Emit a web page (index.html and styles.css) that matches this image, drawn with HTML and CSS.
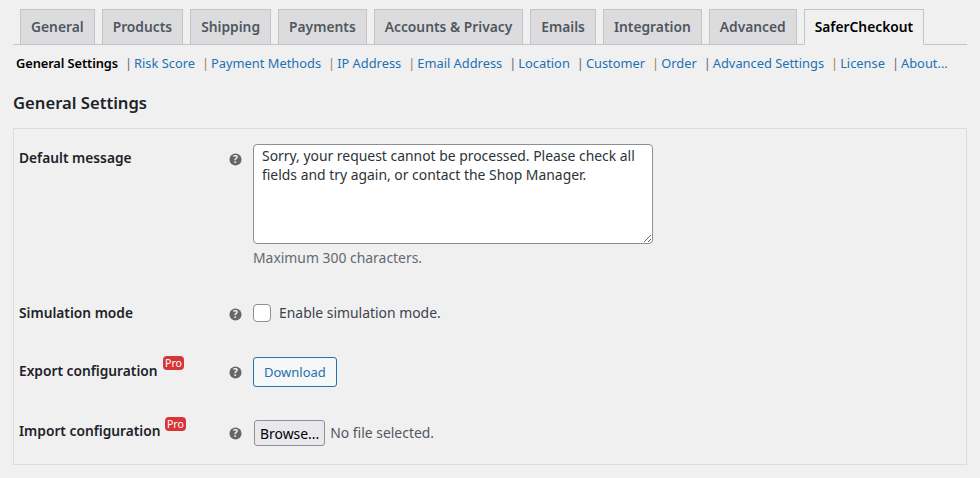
FILE: index.html
```html
<!DOCTYPE html>
<html lang="en">
<head>
<meta charset="utf-8">
<title>SaferCheckout General Settings</title>
<link rel="stylesheet" href="styles.css">
</head>
<body>
<div class="wrap">
  <nav class="tabs">
    <a class="tab" href="#">General</a>
    <a class="tab" href="#">Products</a>
    <a class="tab" href="#">Shipping</a>
    <a class="tab" href="#">Payments</a>
    <a class="tab" href="#">Accounts &amp; Privacy</a>
    <a class="tab" href="#">Emails</a>
    <a class="tab" href="#">Integration</a>
    <a class="tab" href="#">Advanced</a>
    <a class="tab tab-active" href="#">SaferCheckout</a>
  </nav>
  <ul class="subnav">
    <li class="sub-current">General Settings</li>
    <li><span class="sep">|</span><a href="#">Risk Score</a></li>
    <li><span class="sep sep-o">|</span><a href="#">Payment Methods</a></li>
    <li><span class="sep sep-o">|</span><a href="#">IP Address</a></li>
    <li><span class="sep sep-o">|</span><a href="#">Email Address</a></li>
    <li><span class="sep">|</span><a href="#">Location</a></li>
    <li><span class="sep">|</span><a href="#">Customer</a></li>
    <li><span class="sep sep-o">|</span><a href="#">Order</a></li>
    <li><span class="sep">|</span><a href="#">Advanced Settings</a></li>
    <li><span class="sep sep-o">|</span><a href="#">License</a></li>
    <li><span class="sep">|</span><a href="#">About...</a></li>
  </ul>
  <h2 class="title">General Settings</h2>
  <section class="panel">
    <div class="row row-message">
      <div class="label">Default message</div>
      <div class="help"><svg viewBox="0 0 14 14" width="13" height="13"><circle cx="7" cy="7" r="6.5" fill="#666"/><text x="7" y="10.8" class="help-q">?</text></svg></div>
      <div class="field">
        <textarea class="message" rows="5">Sorry, your request cannot be processed. Please check all fields and try again, or contact the Shop Manager.</textarea>
        <p class="hint">Maximum 300 characters.</p>
      </div>
    </div>
    <div class="row row-sim">
      <div class="label">Simulation mode</div>
      <div class="help"><svg viewBox="0 0 14 14" width="13" height="13"><circle cx="7" cy="7" r="6.5" fill="#666"/><text x="7" y="10.8" class="help-q">?</text></svg></div>
      <label class="field check"><span class="checkbox"></span>Enable simulation mode.</label>
    </div>
    <div class="row row-export">
      <div class="label">Export configuration<span class="pro">Pro</span></div>
      <div class="help"><svg viewBox="0 0 14 14" width="13" height="13"><circle cx="7" cy="7" r="6.5" fill="#666"/><text x="7" y="10.8" class="help-q">?</text></svg></div>
      <div class="field"><button class="download" type="button">Download</button></div>
    </div>
    <div class="row row-import">
      <div class="label">Import configuration<span class="pro">Pro</span></div>
      <div class="help"><svg viewBox="0 0 14 14" width="13" height="13"><circle cx="7" cy="7" r="6.5" fill="#666"/><text x="7" y="10.8" class="help-q">?</text></svg></div>
      <div class="field file"><button class="browse" type="button">Browse...</button><span>No file selected.</span></div>
    </div>
  </section>
</div>
</body>
</html>
```
FILE: styles.css
```css
* { box-sizing: border-box; }
html, body { margin: 0; height: 478px; overflow: hidden; }
body { background: #f0f0f1; color: #3c434a; font-family: "Noto Sans", sans-serif; font-size: 13px; line-height: 1.4; }
.wrap { padding: 9px 13px 0; }
a { text-decoration: none; }

.tabs { display: flex; gap: 7px; height: 36px; padding-left: 7px; border-bottom: 1px solid #c3c4c7; }
.tab { height: 36px; padding: 0 10px; border: 1px solid #c3c4c7; background: #dcdcde; color: #50575e; font-size: 13.8px; font-weight: 600; line-height: 34px; white-space: nowrap; }
.tab-active { background: #f0f0f1; border-bottom-color: #f0f0f1; color: #000; }

.subnav { display: flex; list-style: none; margin: 9px 0 0; padding: 0 0 0 3px; height: 18px; font-size: 12.85px; line-height: 18px; white-space: nowrap; }
.subnav a { color: #2271b1; }
.sub-current { color: #000; font-weight: 600; letter-spacing: -0.1px; }
.sep { margin: 0 2px 0 7px; color: #646970; }
.sep-o { color: #a97a50; }

.title { margin: 18px 0 0; height: 25px; color: #1d2327; font-size: 16.64px; font-weight: 600; line-height: 25px; }

.panel { margin-top: 13px; height: 337px; border: 1px solid #dcdcde; }
.row { display: grid; grid-template-columns: 210px 24px 1fr; padding-left: 5px; }
.label { color: #1d2327; font-size: 13.75px; font-weight: 600; line-height: 20px; white-space: nowrap; }
.help { display: flex; }
.help svg { display: block; }
.help-q { fill: #f0f0f1; font-size: 11px; font-weight: 700; text-anchor: middle; font-family: "Noto Sans", sans-serif; }

.row-message { padding-top: 15px; height: 154px; }
.row-message .label { padding-top: 4px; }
.row-message .help { padding-top: 9px; }
.message { display: block; width: 400px; height: 100px; padding: 1px 8px; border: 1px solid #8c8f94; border-radius: 4px; background: #fff; color: #2c3338; font: 13.92px/19px "Noto Sans", sans-serif; }
.hint { margin: 4px 0 0; color: #646970; font-size: 13.92px; line-height: 20px; }

.row-sim { height: 57px; padding-top: 20px; }
.row-sim .help { padding-top: 5px; }
.check { display: flex; align-items: flex-start; font-size: 13.92px; line-height: 20px; }
.checkbox { width: 18px; height: 18px; margin: 1px 8px 0 0; border: 1px solid #8c8f94; border-radius: 4px; background: #fff; }

.row-export { height: 63px; padding-top: 17px; }
.row-export .help { padding-top: 9px; }
.row-export .label { padding-top: 4px; }
.pro { display: inline-block; position: relative; top: -9px; margin-left: 5px; padding: 0 2.5px; border-radius: 4px; background: #d63638; color: #fff; font-size: 10.5px; font-weight: 400; line-height: 14px; }
.download { display: block; height: 30px; padding: 0 10px; border: 1px solid #2271b1; border-radius: 3px; background: #f6f7f7; color: #2271b1; font: 13px/28px "Noto Sans", sans-serif; }

.row-import { padding-top: 17px; }
.row-import .help { padding-top: 7px; }
.row-import .label { padding-top: 1px; }
.row-import .pro { top: -8px; margin-left: 4px; }
.file { display: flex; align-items: center; gap: 5px; padding-left: 1px; height: 26px; font-size: 13.92px; color: #50575e; }
.browse { height: 26px; padding: 0 5px; border: 1px solid #8f8f9d; border-radius: 3px; background: #e9e9ed; color: #000; font: 13.92px "Noto Sans", sans-serif; }
```
